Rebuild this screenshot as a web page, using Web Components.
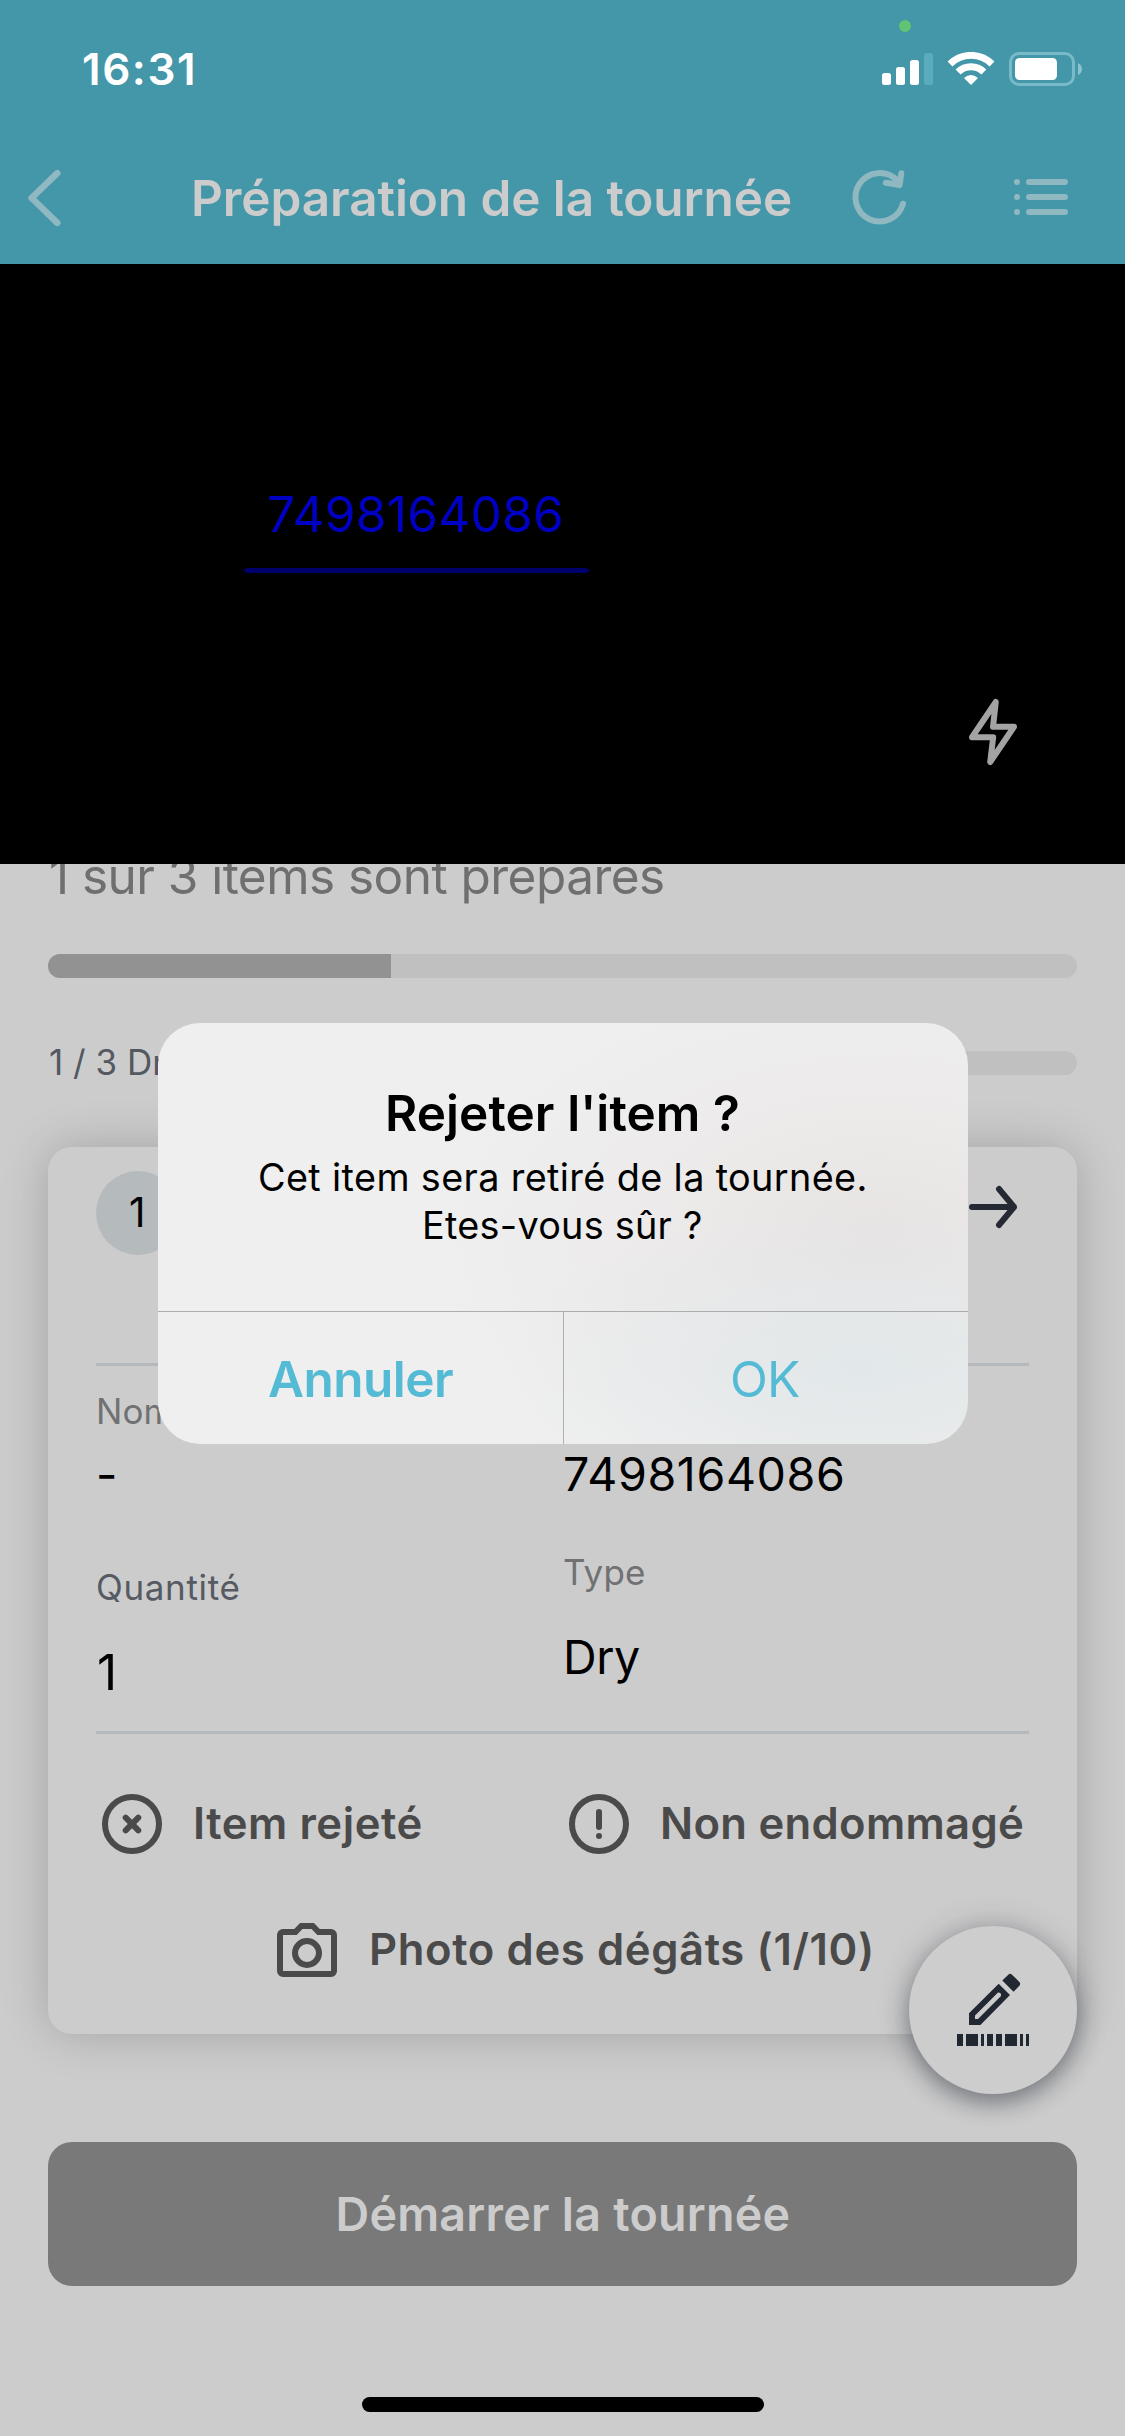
<!DOCTYPE html>
<html lang="fr">
<head>
<meta charset="utf-8">
<title>Préparation de la tournée</title>
<style>
html,body{margin:0;padding:0;background:#ccc}
body{width:1125px;height:2436px;overflow:hidden;font-family:Inter,"Liberation Sans",sans-serif}
</style>
</head>
<body>
<tour-screen></tour-screen>
<script>
const make = (name, html, ready) => customElements.define(name, class extends HTMLElement {
  constructor() {
    super();
    this.attachShadow({ mode: 'open' }).innerHTML = html;
  }
  connectedCallback() { if (ready) ready.call(this, this.shadowRoot); }
});

/* Single line of text whose ink spans exactly `w` pixels. */
const ctx = document.createElement('canvas').getContext('2d');
make('fit-text', `<style>
  :host{display:block;flex:none;white-space:pre;overflow:visible}
  span{display:inline-block;vertical-align:top}
</style><span></span>`, function (root) {
  const size = +this.getAttribute('size'), w = +this.getAttribute('w');
  const weight = this.getAttribute('weight') || 400;
  const value = this.getAttribute('value');
  const span = root.querySelector('span');
  ctx.font = `${weight} ${size}px Inter`;
  const m = ctx.measureText(value);
  const ink = m.actualBoundingBoxRight + m.actualBoundingBoxLeft;
  const n = [...value].length;
  span.textContent = value;
  this.style.cssText += `;width:${w}px;height:${this.getAttribute('lh')}px`;
  span.style.cssText = `font-size:${size}px;font-weight:${weight};line-height:${this.getAttribute('lh')}px;` +
    `margin-left:${m.actualBoundingBoxLeft}px;letter-spacing:${n > 1 ? (w - ink) / (n - 1) : 0}px`;
});

make('status-bar', `<style>
  :host{display:flex;position:relative;height:132px;box-sizing:border-box;padding:43px 43px 0 84px;justify-content:space-between;align-items:flex-start;background:#4496a9;color:#fff}
  .dot{position:absolute;left:899px;top:20px;width:12px;height:12px;border-radius:50%;background:#60c472}
  svg{display:block;margin-top:9px}
</style>
<fit-text value="16:31" size="44" weight="600" lh="52" w="109"></fit-text>
<svg width="200" height="34" viewBox="882 52 200 34">
  <g fill="#fff"><rect x="882" y="73" width="9" height="12" rx="2.5"/><rect x="896" y="67" width="9" height="18" rx="2.5"/><rect x="910" y="60" width="9" height="25" rx="2.5"/></g>
  <rect x="924" y="53" width="9" height="32" rx="2.5" fill="#5aabbb"/>
  <g fill="none" stroke="#fff"><path d="M950 64A29.7 29.7 0 0 1 992 64" stroke-width="6.8"/><path d="M958.1 72.1A18.3 18.3 0 0 1 983.9 72.1" stroke-width="7"/></g>
  <path d="M971 85L964 78Q971 72 978 78Z" fill="#fff"/>
  <rect x="1010.5" y="53.5" width="63" height="31" rx="8.5" fill="none" stroke="#79bac8" stroke-width="3"/>
  <rect x="1015" y="58" width="42" height="22" rx="4.5" fill="#fff"/>
  <path d="M1078 63Q1082 65 1082 69T1078 75Z" fill="#8ac3ce"/>
</svg>
<div class="dot"></div>`);

make('nav-bar', `<style>
  :host{display:flex;height:132px;align-items:center;background:#4496a9;color:#ccc}
  svg{display:block;flex:none;fill:none;stroke:#8fb8c0;stroke-width:6;stroke-linecap:round;stroke-linejoin:round}
  .back{margin-left:24px;margin-right:130px;stroke-width:6.6}
  .reload{margin-left:58px;margin-right:102px}
</style>
<svg class="back" width="40" height="60" viewBox="24 168 40 60"><path d="M57.3 173.2L31.6 198L57.3 222.8"/></svg>
<fit-text value="Préparation de la tournée" size="49.5" weight="600" lh="60" w="597"></fit-text>
<svg class="reload" width="60" height="60" viewBox="849 168 60 60"><path d="M903 203.7A24.2 24.2 0 1 1 896.8 180.2L899.4 185M901.3 173.2L899.6 185L885.8 182.8"/></svg>
<svg width="60" height="60" viewBox="1011 168 60 60"><path d="M1029 182H1065M1029 197H1065M1029 212H1065M1017 182h0M1017 197h0M1017 212h0"/></svg>`);

make('scanner-view', `<style>
  :host{display:flex;flex-direction:column;height:600px;background:#000;color:#0000c4}
  .code{margin:220px 0 0 269px}
  .line{display:block;margin:24px 0 0 243px}
  .flash{display:block;margin:123px 0 0 966px;fill:none;stroke:#a3a3a3;stroke-width:6;stroke-linejoin:round}
</style>
<fit-text class="code" value="7498164086" size="49.5" lh="60" w="292"></fit-text>
<svg class="line" width="347" height="5"><path d="M0 2.5L4 0H343L347 2.5L343 5H4Z" fill="#00006c"/></svg>
<svg class="flash" width="54" height="72" viewBox="966 696 54 72"><path d="M995.8 702L993 726.8H1014L990.2 762L993.2 737.2H972Z"/></svg>`);

make('progress-track', `<style>
  :host{display:block;height:24px;border-radius:12px;background:#c0c0c0;overflow:hidden}
  div{height:24px;background:#929292}
</style><div></div>`, function (root) {
  root.querySelector('div').style.width = (this.getAttribute('fill') || 0) + 'px';
});

make('tour-progress', `<style>
  :host{display:flex;flex-direction:column;height:283px;padding:0 48px;box-sizing:border-box}
  .clip{overflow:hidden;height:54px;padding-left:3px;margin-bottom:36px;color:#6f6f71}
  .clip fit-text{margin-top:-18px}
  .row{display:flex;align-items:flex-start;margin-top:63px;padding-left:2px;color:#535861}
  .row progress-track{flex:1;margin:10px 0 0 215px}
</style>
<div class="clip"><fit-text value="1 sur 3 items sont préparés" size="49.5" lh="60" w="612"></fit-text></div>
<progress-track fill="343"></progress-track>
<div class="row"><fit-text value="1 / 3 Dry" size="35" lh="42" w="135"></fit-text><progress-track></progress-track></div>`);

make('action-item', `<style>
  :host{display:flex;align-items:center;color:#4a4a4a}
  ::slotted(svg){display:block;flex:none;fill:none;stroke:#4a4a4a;stroke-width:6;margin-right:var(--gap,34px)}
</style><slot></slot>`);

make('item-card', `<style>
  :host{display:flex;flex-direction:column;box-sizing:border-box;height:887px;margin:0 48px;padding:24px 48px 0;border-radius:24px;background:#ccc;box-shadow:0 0 48px rgba(0,0,0,.2)}
  .head{display:flex;justify-content:space-between;height:84px;margin-bottom:108px}
  .num{display:flex;width:84px;height:84px;border-radius:50%;background:#b5babd}
  .num fit-text{margin:17px 0 0 34px}
  .go{display:block;margin:12px 9px 0 0;fill:none;stroke:#242933;stroke-width:6;stroke-linecap:round;stroke-linejoin:round}
  hr{margin:0;border:0;height:3px;background:#b6b9bc;flex:none}
  .cols{display:flex;height:365px}
  .a{width:465px;padding-left:3px}
  .b{padding-top:80px;padding-left:1px}
  .lab{color:#717173}.dark{color:#555a63}
  .row{display:flex;margin-top:60px;padding-left:6px;height:60px}
  .row2{display:flex;justify-content:flex-start;margin:69px 0 0 181px;height:54px;--gap:35px}
</style>
<div class="head">
  <div class="num"><fit-text value="1" size="40.6" lh="50" w="14"></fit-text></div>
  <svg class="go" width="54" height="48" viewBox="966 1183 54 48"><path d="M972 1207H1014M999 1189L1014 1207L999 1225"/></svg>
</div>
<hr>
<div class="cols">
  <div class="a">
    <fit-text class="lab" style="margin-top:24px" value="Nom" size="35" lh="42" w="72.5"></fit-text>
    <fit-text style="margin-top:14px" value="-" size="46.6" lh="56" w="16"></fit-text>
    <fit-text class="dark" style="margin:64px 0 0 -1px" value="Quantité" size="35" lh="42" w="140.5"></fit-text>
    <fit-text style="margin-top:34px" value="1" size="49.5" lh="60" w="16"></fit-text>
  </div>
  <div class="b">
    <fit-text value="7498164086" size="46.6" lh="56" w="278"></fit-text>
    <fit-text class="lab" style="margin:49px 0 0 -1px" value="Type" size="35" lh="42" w="80"></fit-text>
    <fit-text style="margin:36px 0 0 2px" value="Dry" size="46.6" lh="56" w="72"></fit-text>
  </div>
</div>
<hr>
<div class="row">
  <action-item style="width:467px">
    <svg width="60" height="60" viewBox="0 0 60 60"><circle cx="30" cy="30" r="27"/><path d="M23.7 23.7L36.3 36.3M36.3 23.7L23.7 36.3" stroke-linecap="round"/></svg>
    <fit-text value="Item rejeté" size="43.6" weight="600" lh="54" w="224.5"></fit-text>
  </action-item>
  <action-item>
    <svg width="60" height="60" viewBox="0 0 60 60"><circle cx="30" cy="30" r="27"/><path d="M30 18V33M30 42h0" stroke-linecap="round"/></svg>
    <fit-text value="Non endommagé" size="43.6" weight="600" lh="54" w="359"></fit-text>
  </action-item>
</div>
<action-item class="row2">
  <svg width="60" height="54" viewBox="0 0 60 54"><path d="M6 9H18.4L24.3 3H35.7L41.6 9H54A3 3 0 0 1 57 12V48A3 3 0 0 1 54 51H6A3 3 0 0 1 3 48V12A3 3 0 0 1 6 9Z"/><circle cx="30" cy="30" r="12"/></svg>
  <fit-text value="Photo des dégâts (1/10)" size="43.6" weight="600" lh="54" w="499"></fit-text>
</action-item>`);

make('primary-button', `<style>
  :host{display:flex;align-items:center;justify-content:center;height:144px;margin:108px 48px 0;padding-left:2px;border-radius:24px;background:#797979;color:#ccc}
</style><fit-text value="Démarrer la tournée" size="46.6" weight="600" lh="56" w="450"></fit-text>`);

make('edit-fab', `<style>
  :host{position:absolute;left:909px;top:1926px;width:168px;height:168px;border-radius:50%;background:#cdcdcd;box-shadow:0 9px 22px rgba(34,40,52,.42),0 0 34px rgba(34,40,52,.2)}
  svg{display:block;fill:#222831}
</style>
<svg width="168" height="168" viewBox="909 1926 168 168">
  <path fill-rule="evenodd" d="M969 2025V2013.3L998.7 1983.7L1010 1995L980.4 2025ZM975 2019H978L1001 1996Q1001.6 1992.6 998 1992.6L975 2015.6Z"/>
  <path d="M1002.3 1980.6L1008.3 1974.7Q1010 1973 1012 1974.7L1019.4 1982Q1021 1983.8 1019.4 1985.7L1013.5 1991.8Z"/>
  <path d="M957 2034h6v12h-6zM966 2034h12v12h-12zM981 2034h3v12h-3zM987 2034h6v12h-6zM996 2034h6v12h-6zM1005 2034h12v12h-12zM1020 2034h3v12h-3zM1026 2034h3v12h-3z"/>
</svg>`);

make('confirm-dialog', `<style>
  :host{position:absolute;left:158px;top:1023px;width:810px;height:421px;border-radius:42px;overflow:hidden;display:flex;flex-direction:column;color:#000;
    background:radial-gradient(ellipse 360px 160px at 700px 345px,#e2e8ea 0,rgba(226,232,234,0) 100%),radial-gradient(ellipse 440px 260px at 720px 215px,#e7e3e3 0,rgba(235,231,231,.7) 45%,rgba(239,237,237,0) 100%),#efefef}
  .msg{flex:none;height:288px;display:flex;flex-direction:column;align-items:flex-start;box-sizing:border-box;padding-top:60px}
  .btns{display:flex;flex:1;border-top:1px solid #acacac;color:#55bbd5}
  .btns div{box-sizing:border-box;padding-top:37px}
  .no{width:406px;border-right:1px solid #b0b0b0;padding-left:111px}
  .ok{padding-left:168px}
</style>
<div class="msg">
  <fit-text style="margin-left:230px" value="Rejeter l'item ?" size="49.5" weight="600" lh="60" w="350"></fit-text>
  <fit-text style="margin:10px 0 0 102px" value="Cet item sera retiré de la tournée." size="37.8" lh="48" w="604.5"></fit-text>
  <fit-text style="margin-left:267px" value="Etes-vous sûr ?" size="37.8" lh="48" w="276"></fit-text>
</div>
<div class="btns">
  <div class="no"><fit-text value="Annuler" size="49.5" weight="600" lh="60" w="184"></fit-text></div>
  <div class="ok"><fit-text value="OK" size="49.5" lh="60" w="67"></fit-text></div>
</div>`);

make('tour-screen', `<style>
  :host{display:flex;flex-direction:column;position:relative;width:1125px;height:2436px;overflow:hidden;background:#ccc;color:#000}
  .home{width:402px;height:15px;margin:111px 0 0 362px;border-radius:7.5px;background:#000}
</style>
<status-bar></status-bar>
<nav-bar></nav-bar>
<scanner-view></scanner-view>
<tour-progress></tour-progress>
<item-card></item-card>
<primary-button></primary-button>
<div class="home"></div>
<edit-fab></edit-fab>
<confirm-dialog></confirm-dialog>`);
</script>
</body>
</html>
